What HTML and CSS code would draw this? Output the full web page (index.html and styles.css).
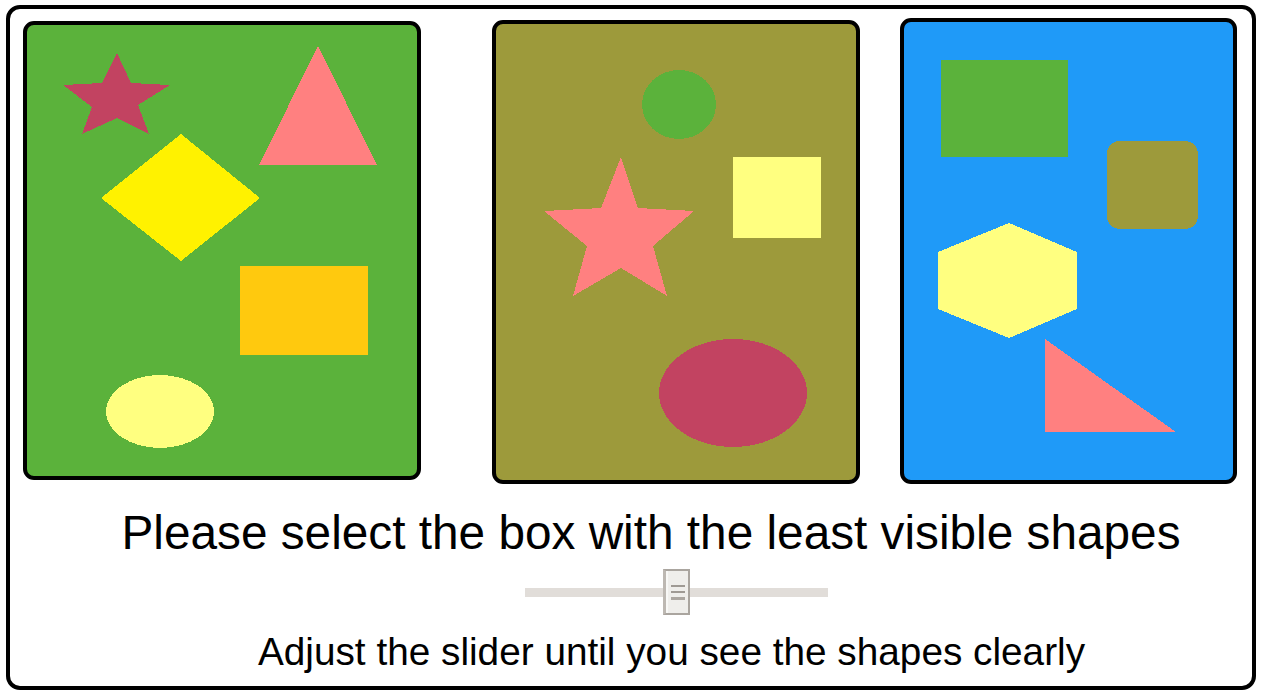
FILE: index.html
```html
<!DOCTYPE html>
<html lang="en">
<head>
<meta charset="utf-8">
<title>Least visible shapes</title>
<link rel="stylesheet" href="styles.css">
</head>
<body>
<div class="frame">
  <div class="boxes">
    <div class="box box-green">
      <svg class="shapes" viewBox="27 25 390 451" shape-rendering="crispEdges">
        <polygon fill="#c24361" points="117,53 131,83 170,85 138,105 149,134 117,118 82,134 92,107 63,85 102,83"/>
        <polygon fill="#ff8080" points="318,46 377,165 259,165"/>
        <polygon fill="#fff200" points="181,134 260,198 181,261 101,198"/>
        <rect fill="#ffc90e" x="240" y="266" width="128" height="89"/>
        <ellipse fill="#ffff80" cx="160" cy="411.5" rx="54" ry="36.5"/>
      </svg>
    </div>
    <div class="box box-olive">
      <svg class="shapes" viewBox="496 24 360 456" shape-rendering="crispEdges">
        <ellipse fill="#5bb23b" cx="679" cy="104.5" rx="37" ry="34.5"/>
        <rect fill="#ffff80" x="733" y="157" width="88" height="81"/>
        <polygon fill="#ff8080" points="621,157 638,208 694,211 653,246 667,296 621,268 573,296 587,246 544,211 601,208"/>
        <ellipse fill="#c24361" cx="733" cy="393" rx="74" ry="54"/>
      </svg>
    </div>
    <div class="box box-blue">
      <svg class="shapes" viewBox="904 22 329 458" shape-rendering="crispEdges">
        <rect fill="#5bb23b" x="941" y="60" width="127" height="97"/>
        <rect fill="#9d9a3b" x="1107" y="141" width="91" height="88" rx="13" ry="13"/>
        <polygon fill="#ffff80" points="1009,223 1077,252 1077,309 1009,338 938,309 938,252"/>
        <polygon fill="#ff8080" points="1045,339 1176,432 1045,432"/>
      </svg>
    </div>
  </div>
  <p class="title">Please select the box with the least visible shapes</p>
  <div class="slider">
    <div class="track"></div>
    <div class="thumb">
      <span class="grip"></span>
      <span class="grip"></span>
      <span class="grip grip-thick"></span>
    </div>
  </div>
  <p class="hint">Adjust the slider until you see the shapes clearly</p>
</div>
</body>
</html>
```

FILE: styles.css
```css
* { box-sizing: border-box; }

html, body {
  margin: 0;
  padding: 0;
  background: #ffffff;
}

body {
  font-family: "Liberation Sans", Arial, sans-serif;
  color: #000000;
}

.frame {
  margin: 5px 0 0 6px;
  width: 1250px;
  height: 685px;
  border: 4px solid #000000;
  border-radius: 14px;
  display: flex;
  flex-direction: column;
  align-items: center;
}

.boxes {
  align-self: stretch;
  display: flex;
  align-items: flex-start;
  padding-top: 9px;
  height: 475px;
}

.box {
  border: 4px solid #000000;
  border-radius: 11px;
  overflow: hidden;
  display: flex;
}

.shapes {
  width: 100%;
  height: 100%;
  display: block;
}

.box-green {
  background: #5bb23b;
  margin: 3px 0 0 13px;
  width: 398px;
  height: 459px;
}

.box-olive {
  background: #9d9a3b;
  margin: 2px 0 0 71px;
  width: 368px;
  height: 464px;
}

.box-blue {
  background: #1f9af8;
  margin: 0 0 0 40px;
  width: 337px;
  height: 466px;
}

.title {
  margin: 25px 0 0 40px;
  font-size: 47.75px;
  line-height: 48px;
  white-space: nowrap;
}

.slider {
  margin: 12px 0 0 91px;
  width: 303px;
  height: 46px;
  position: relative;
  display: flex;
  align-items: center;
}

.track {
  width: 100%;
  height: 9px;
  background: #e1ddd9;
}

.thumb {
  position: absolute;
  left: 138px;
  top: 0;
  width: 27px;
  height: 46px;
  background: #efeeeb;
  border: 2px solid #aaa59f;
  border-left-width: 3px;
  border-left-color: #bdb8b2;
  box-shadow: inset 2px 0 0 #f8f8f6;
  display: flex;
  flex-direction: column;
  align-items: flex-end;
  justify-content: center;
  gap: 4px;
  padding-right: 3px;
}

.grip {
  display: block;
  width: 14px;
  height: 2px;
  background: #9f9a94;
}

.grip-thick {
  height: 3px;
  background: #aca7a1;
}

.hint {
  margin: 17px 0 0 81px;
  font-size: 38.75px;
  line-height: 39px;
  white-space: nowrap;
}
```
